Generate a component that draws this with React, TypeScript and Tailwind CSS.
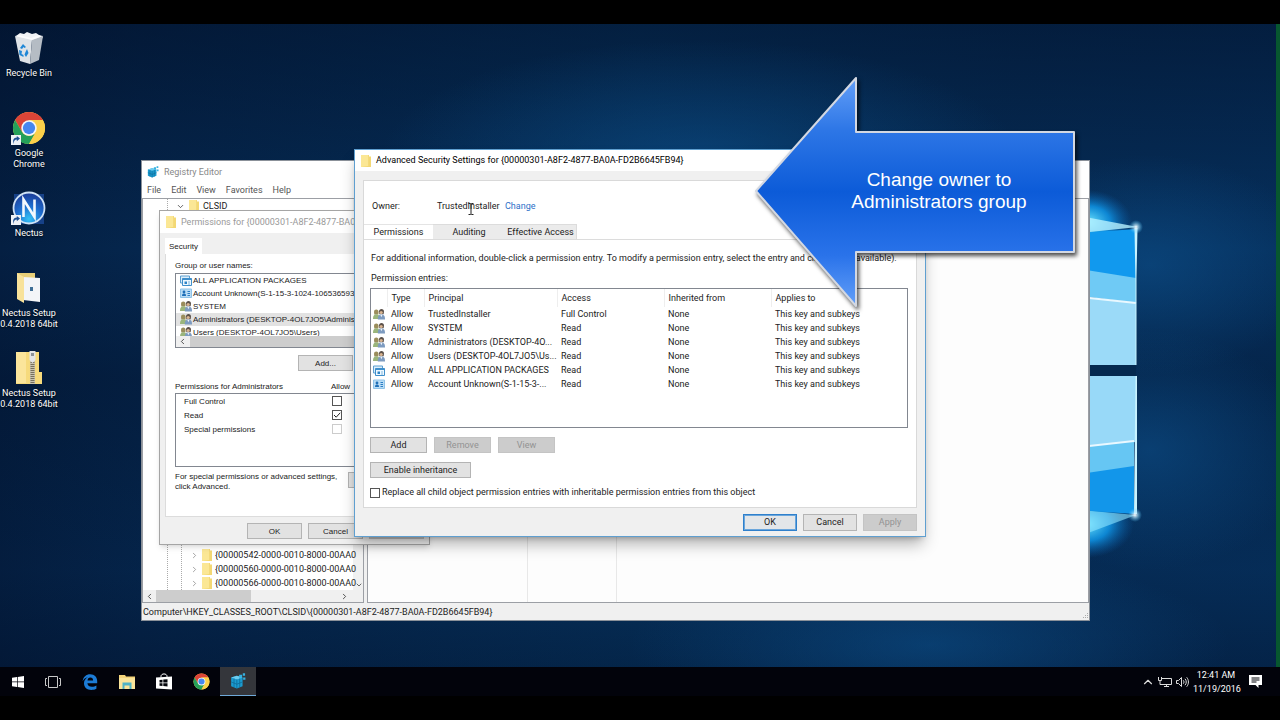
import type { ReactNode } from 'react';
import clsx from 'clsx';
import { ChevronDown, ChevronLeft, ChevronRight, ChevronUp } from 'lucide-react';

const KEY_ID = '{00000301-A8F2-4877-BA0A-FD2B6645FB94}';

const treeKeys = [
    '{00000542-0000-0010-8000-00AA0',
    '{00000560-0000-0010-8000-00AA0',
    '{00000566-0000-0010-8000-00AA0',
];

const groups = [
    { icon: 'package', name: 'ALL APPLICATION PACKAGES' },
    { icon: 'account', name: 'Account Unknown(S-1-15-3-1024-10653659300' },
    { icon: 'users', name: 'SYSTEM' },
    { icon: 'users', name: 'Administrators (DESKTOP-4OL7JO5\\Administrators)', selected: true },
    { icon: 'users', name: 'Users (DESKTOP-4OL7JO5\\Users)' },
];

const entries = [
    { icon: 'users', principal: 'TrustedInstaller', access: 'Full Control' },
    { icon: 'users', principal: 'SYSTEM', access: 'Read' },
    { icon: 'users', principal: 'Administrators (DESKTOP-4O...', access: 'Read' },
    { icon: 'users', principal: 'Users (DESKTOP-4OL7JO5\\Us...', access: 'Read' },
    { icon: 'package', principal: 'ALL APPLICATION PACKAGES', access: 'Read' },
    { icon: 'account', principal: 'Account Unknown(S-1-15-3-...', access: 'Read' },
];

/* ---------- icons ---------- */

function FolderIcon({ className = 'w-[10px] h-3' }: { className?: string }) {
    return (
        <svg viewBox="0 0 10 12" className={clsx('shrink-0', className)}>
            <path d="M0 0h8v1.5h2V12H0z" fill="#f3d874" />
            <path d="M0 0h7.2v11L0 12z" fill="#fbe795" />
        </svg>
    );
}

function PrincipalIcon({ kind }: { kind: string }) {
    if (kind === 'users') {
        return (
            <svg viewBox="0 0 12 11" className="w-3 h-[11px] shrink-0">
                <path d="M1 3c0-1.700.9-2.500 2.300-2.500S5.600 1.400 5.600 3L5.300 5.500h-4z" fill="#9a8d5c" />
                <path d="M0 10c0-3.200 1-4.700 3.400-4.700S6.800 6.800 6.800 10z" fill="#9ab57c" />
                <path d="M6 2.500C6 1 7 0 8.500 0S11 1 11 2.700l-.4 2.500H6.400z" fill="#5b5049" />
                <circle cx="8.200" cy="3.500" r="1.600" fill="#d9b592" />
                <path d="M4.800 10.500c0-3.600 1-5 3.600-5s3.600 1.400 3.600 5z" fill="#7d9bc0" />
                <path d="M7.300 5.700l1.100 2.600 1.100-2.600z" fill="#eef2f7" />
            </svg>
        );
    }
    if (kind === 'package') {
        return (
            <svg viewBox="0 0 12 11" className="w-3 h-[11px] shrink-0">
                <path d="M.5 1h9v7h-9z" fill="#dceefb" stroke="#5d9fd0" />
                <path d="M2.500 3.500h9v7h-9z" fill="#eef8ff" stroke="#3f8fcb" />
                <path d="M2.500 3.500h9v1.500h-9z" fill="#3f8fcb" />
                <path d="M4.500 6.500h2.500v2.500H4.500z" fill="#2f84c6" />
                <path d="M8 7h2M8 9h2" stroke="#7fb7de" />
            </svg>
        );
    }
    return (
        <svg viewBox="0 0 12 11" className="w-3 h-[11px] shrink-0">
            <path d="M.5 1h11v8.500H.5z" fill="#b9dcf5" stroke="#8fc3e8" />
            <circle cx="4" cy="4" r="1.400" fill="#1e6fb8" />
            <path d="M2 8c0-2 .8-2.600 2-2.600S6 6 6 8z" fill="#1e6fb8" />
            <path d="M7.500 3.500h2.500M7.500 5.500h2.500M7.500 7.500h2.500" stroke="#2b7dc4" />
        </svg>
    );
}

function RegistryIcon({ className }: { className: string }) {
    return (
        <svg viewBox="0 0 14 14" className={clsx('shrink-0', className)}>
            <path d="M1 4l5-1.500 5 1.500v7.500L6 13.500 1 11.500z" fill="#1b9bd0" />
            <path d="M1 4l5 1.600 5-1.600-5-1.500z" fill="#6ccdf0" />
            <path d="M6 5.600v7.900M1 7.800l5 2 5-2M3.500 4.800v7.700M8.500 4.800v7.700" stroke="#0d6590" strokeWidth=".6" fill="none" />
            <path d="M8 1.500h2.600v2.600H8zM11.200.3h2v2h-2zM11.500 4h2v2h-2z" fill="#35b1e0" />
        </svg>
    );
}

function ChromeIcon({ className }: { className: string }) {
    return (
        <svg viewBox="0 0 36 36" className={className}>
            <circle cx="18" cy="18" r="17" fill="#fbd04a" />
            <path d="M3.300 9.500A17 17 0 0 1 32.700 9.500H18L10.600 22.200z" fill="#db4437" />
            <path d="M3.300 9.500L10.600 22.200A8.500 8.500 0 0 0 18 26.500L15.500 34.800A17 17 0 0 1 3.300 9.500z" fill="#24a05a" />
            <path d="M10.600 22.200A8.500 8.500 0 0 0 25.300 22.200L18 35a17 17 0 0 1-4-.5z" fill="#24a05a" />
            <path d="M32.700 9.500H18a8.500 8.500 0 0 1 7.300 12.700L18 35A17 17 0 0 0 32.700 9.500z" fill="#fbd04a" />
            <circle cx="18" cy="18" r="8.200" fill="#f4f6f8" />
            <circle cx="18" cy="18" r="6.500" fill="#4687f0" />
        </svg>
    );
}

function ShortcutArrow() {
    return (
        <svg viewBox="0 0 10 10" className="absolute left-[-1px] bottom-0 w-[10px] h-[10px]">
            <path d="M0 0h10v10H0z" fill="#eef2f6" />
            <path d="M3 9c-.6-3 .6-4.600 2.800-4.600V6.200L9 3.400 5.800.9v1.700C2.500 2.700 1.200 5.500 3 9z" fill="#1d4f91" />
        </svg>
    );
}

function RecycleBinIcon() {
    return (
        <svg viewBox="0 0 30 34" className="w-[30px] h-[34px]">
            <path d="M2 5l4-3 4 1 3-2 5 2 4-1 3 2 4 2-2 3H4z" fill="#f1f3f5" />
            <path d="M1 5l17 4-2 24-10-3z" fill="#dfe3e7" />
            <path d="M29 5L18 9l-2 24 9-4z" fill="#b5bcc4" />
            <path d="M1 5l4-1 12 3 8-3 4 1-11 4z" fill="#ffffff" opacity=".7" />
            <path d="M6 17l3-4 3 3-1.500 1-1-1L8 18zM5 19l3 1-.5 3 2 1v2l-4-2zM13 18l1.500 4-2.500 4-1.500-2.500 1-2.500z" fill="#1f87d6" />
        </svg>
    );
}

function NectusIcon() {
    return (
        <svg viewBox="0 0 34 34" className="w-[34px] h-[34px]">
            <defs>
                <radialGradient id="nectus" cx=".5" cy=".85" r=".8">
                    <stop offset="0" stopColor="#35c2f5" />
                    <stop offset=".5" stopColor="#1e6fd0" />
                    <stop offset="1" stopColor="#1b3f9c" />
                </radialGradient>
            </defs>
            <path d="M2 3h30v30H2z" fill="#1c4a9a" opacity=".8" />
            <circle cx="17" cy="17" r="15.500" fill="url(#nectus)" stroke="#cfe2f5" strokeWidth="1.800" />
            <path d="M11.500 26V8.500L22.500 26V8.500" fill="none" stroke="#f3f8fd" strokeWidth="2.600" />
        </svg>
    );
}

function OpenFolderIcon() {
    return (
        <svg viewBox="0 0 24 32" className="w-6 h-8">
            <path d="M0 1h18v25H0z" fill="#e8cf78" />
            <path d="M6 5l17 1v24L6 28z" fill="#f3f5f8" />
            <path d="M0 1l7 4v26l-7-4z" fill="#f8e29a" />
            <path d="M13 15h3v4h-3z" fill="#3f6f96" />
        </svg>
    );
}

function ZipFolderIcon() {
    return (
        <svg viewBox="0 0 26 34" className="w-[26px] h-[34px]">
            <path d="M0 1h23v20h3v12H0z" fill="#f6da7c" />
            <path d="M0 1h10v31H0z" fill="#fbe59b" />
            <path d="M14 1h5v32h-5z" fill="#c9c3b0" />
            <path d="M16.500 11v22" stroke="#77705c" strokeWidth="4" strokeDasharray="1 1" />
            <path d="M13.500 0h6v9l-3 3-3-3z" fill="#e3e5e7" />
            <path d="M15 2h3v3h-3z" fill="#8b9196" />
        </svg>
    );
}

const desktopItems: { label: string; icon: ReactNode; shortcut?: boolean }[] = [
    { label: 'Recycle Bin', icon: <RecycleBinIcon /> },
    { label: 'Google Chrome', icon: <ChromeIcon className="w-[34px] h-[34px]" />, shortcut: true },
    { label: 'Nectus', icon: <NectusIcon />, shortcut: true },
    { label: 'Nectus Setup 0.4.2018 64bit', icon: <OpenFolderIcon /> },
    { label: 'Nectus Setup 0.4.2018 64bit', icon: <ZipFolderIcon /> },
];

/* ---------- shared controls ---------- */

interface WinButtonProps {
    children: ReactNode;
    className?: string;
    disabled?: boolean;
    primary?: boolean;
}

function WinButton({ children, className, disabled, primary }: WinButtonProps) {
    return (
        <button
            disabled={disabled}
            className={clsx(
                'shrink-0 border text-center',
                disabled && 'bg-[#cccccc] border-[#c4c4c4] text-[#939393]',
                primary && 'bg-[#e3e6e9] border-[#2f80cc] ring-1 ring-inset ring-[#6aa6dc]',
                !disabled && !primary && 'bg-[#e2e2e2] border-[#b4b4b4]',
                className,
            )}
        >
            {children}
        </button>
    );
}

function TickBox({ id, checked, disabled }: { id: string; checked?: boolean; disabled?: boolean }) {
    return (
        <span className="relative shrink-0 w-[10px] h-[10px]">
            <input
                id={id}
                type="checkbox"
                defaultChecked={checked}
                disabled={disabled}
                className="peer block appearance-none w-[10px] h-[10px] bg-white border border-[#555] disabled:border-[#ccc]"
            />
            <svg viewBox="0 0 10 10" className="absolute inset-0 hidden peer-checked:block pointer-events-none">
                <path d="M2 5l2.200 2.200L8.200 2.800" fill="none" stroke="#222" />
            </svg>
        </span>
    );
}

/* ---------- wallpaper ---------- */

function Wallpaper() {
    return (
        <svg viewBox="0 24 1280 643" preserveAspectRatio="none" className="absolute inset-0 w-full h-full">
            <defs>
                <linearGradient id="base" x1="0" x2="1" y1="0" y2="0">
                    <stop offset="0" stopColor="#041f42" />
                    <stop offset=".11" stopColor="#05264d" />
                    <stop offset=".5" stopColor="#06335f" />
                    <stop offset=".8" stopColor="#062e59" />
                    <stop offset="1" stopColor="#06305d" />
                </linearGradient>
                <linearGradient id="shade" x1="0" x2="0" y1="0" y2="1">
                    <stop offset="0" stopColor="#010c22" stopOpacity=".5" />
                    <stop offset=".35" stopColor="#010c22" stopOpacity="0" />
                    <stop offset=".55" stopColor="#010c22" stopOpacity=".3" />
                    <stop offset=".85" stopColor="#010c22" stopOpacity=".1" />
                    <stop offset="1" stopColor="#010c22" stopOpacity=".35" />
                </linearGradient>
                <radialGradient id="haze">
                    <stop offset="0" stopColor="#0d5390" stopOpacity=".9" />
                    <stop offset="1" stopColor="#0d5390" stopOpacity="0" />
                </radialGradient>
                <radialGradient id="flare">
                    <stop offset="0" stopColor="#6fe6ff" />
                    <stop offset=".5" stopColor="#0f9cf0" stopOpacity=".8" />
                    <stop offset="1" stopColor="#0a5fae" stopOpacity="0" />
                </radialGradient>
                <radialGradient id="spark">
                    <stop offset="0" stopColor="#ffffff" />
                    <stop offset="1" stopColor="#49c8ff" stopOpacity="0" />
                </radialGradient>
            </defs>
            <path d="M0 24h1280v643H0z" fill="url(#base)" />
            <path d="M0 24h1280v643H0z" fill="url(#shade)" />
            <ellipse cx="700" cy="160" rx="320" ry="120" fill="url(#haze)" opacity=".6" />
            <ellipse cx="930" cy="645" rx="300" ry="90" fill="url(#haze)" opacity=".6" />
            <ellipse cx="1150" cy="265" rx="170" ry="110" fill="url(#haze)" opacity=".6" />
            <ellipse cx="1150" cy="450" rx="160" ry="120" fill="url(#haze)" opacity=".6" />
            <ellipse cx="1088" cy="222" rx="44" ry="32" fill="url(#flare)" />
            <ellipse cx="1086" cy="524" rx="48" ry="34" fill="url(#flare)" />
            <path d="M1080 216l58 11-58 6z" fill="#b8f1ff" opacity=".8" />
            <path d="M1080 536l56-21-56-5z" fill="#8fe6ff" opacity=".6" />
            <path d="M1080 233l56-4v50l-56-9z" fill="#1199ee" />
            <path d="M1080 269l56 9v25l-56-7z" fill="#6fcaf5" />
            <path d="M1080 296l56 7v62h-56z" fill="#9bdaf8" />
            <path d="M1080 297l56 6" stroke="#e9f8ff" strokeWidth="2" />
            <path d="M1080 365h56v11h-56z" fill="#04294f" />
            <path d="M1080 376h56v66l-56 5z" fill="#98d9f8" />
            <path d="M1080 447l54-6v26l-54 8z" fill="#66c6f3" />
            <path d="M1080 447l54-6" stroke="#e9f8ff" strokeWidth="2" />
            <path d="M1080 474l54-8v48l-54-4z" fill="#1296ea" />
            <path d="M1134.500 228h3l-1 50v87h-1v-80zM1135.500 376h1.500v138h-3z" fill="#c9f3ff" />
            <circle cx="1136" cy="227" r="7" fill="url(#spark)" />
            <circle cx="1135" cy="515" r="7" fill="url(#spark)" />
            <path d="M1276 24h4v643h-4z" fill="#07572f" />
        </svg>
    );
}

/* ---------- windows ---------- */

function RegistryEditor() {
    return (
        <section className="absolute left-[141px] top-[136px] w-[949px] flex flex-col bg-white border border-[#8b9199]">
            <header className="h-[21px] pt-px px-[5px] flex items-center gap-[5px] text-[#888]">
                <RegistryIcon className="w-3 h-3" />
                <h2>Registry Editor</h2>
            </header>
            <nav className="h-4 px-[5px] flex items-center gap-[10px] text-[#555]">
                {['File', 'Edit', 'View', 'Favorites', 'Help'].map((item) => (
                    <button key={item}>{item}</button>
                ))}
            </nav>

            <div className="h-[405px] flex gap-[3px] bg-[#f0f0f0]">
                <div className="w-[222px] flex flex-col border border-[#9c9fa5] bg-white">
                    <div className="flex-1 flex min-h-0">
                        <div className="relative z-10 flex-1 min-w-0 pl-6 flex">
                            <div className="flex-1 min-w-0 flex flex-col border-l border-dotted border-[#aaa] pl-2">
                                <div className="h-[14px] flex items-center gap-1">
                                    <ChevronDown size={9} color="#333" />
                                    <FolderIcon />
                                    <span className="text-[#222]">CLSID</span>
                                </div>
                                <ul className="flex-1 ml-[5px] pl-2 flex flex-col justify-end border-l border-dotted border-[#aaa]">
                                    {treeKeys.map((key) => (
                                        <li key={key} className="h-[14px] flex items-center gap-[3px] whitespace-nowrap">
                                            <ChevronRight size={9} color="#888" className="shrink-0" />
                                            <FolderIcon />
                                            <span>{key}</span>
                                        </li>
                                    ))}
                                </ul>
                            </div>
                        </div>
                        <div className="w-[10px] bg-[#f0f0f0] flex flex-col justify-between items-end py-px">
                            <ChevronUp size={8} />
                            <ChevronDown size={8} />
                        </div>
                    </div>
                    <div className="h-3 pl-[2px] pr-[14px] bg-[#f0f0f0] flex items-center gap-[2px]">
                        <ChevronLeft size={9} />
                        <div className="w-[95px] h-full bg-[#cdcdcd]" />
                        <ChevronRight size={9} className="ml-auto" />
                    </div>
                </div>
                <div className="flex-1 flex border border-[#9c9fa5] bg-[#fdfdfd]">
                    <div className="w-[160px] border-r border-[#e8e8e8]" />
                    <div className="w-[89px] border-r border-[#e8e8e8]" />
                </div>
            </div>
            <footer className="h-[17px] pt-[2px] flex items-center justify-between bg-[#f0f0f0] pl-px text-[#222]">
                <span>Computer\HKEY_CLASSES_ROOT\CLSID\{KEY_ID}</span>
                <svg viewBox="0 0 8 8" className="w-2 h-2 self-end">
                    <path d="M6 1h1v1H6zM4 3h1v1H4zM6 3h1v1H6zM2 5h1v1H2zM4 5h1v1H4zM6 5h1v1H6z" fill="#aaa" />
                </svg>
            </footer>
        </section>
    );
}

function PermissionsDialog() {
    return (
        <section className="absolute z-10 left-[159px] top-[186px] w-[271px] bg-[#f0f0f0] border border-[#a5a5a5] shadow-md text-[8px] font-['Liberation_Sans',sans-serif]">
            <header className="h-[22px] px-[6px] flex items-center gap-[5px] bg-white text-[#999] overflow-hidden whitespace-nowrap text-[9px] font-[Roboto,sans-serif]">
                <FolderIcon />
                <h2>Permissions for {KEY_ID}</h2>
            </header>
            <div className="px-[5px] pt-[5px] pb-[5px]">
                <button role="tab" aria-selected="true" className="block h-4 px-1 bg-white">Security</button>
                <div className="bg-white border border-t-0 border-[#dcdcdc] px-[9px] pt-[6px] pb-6">
                    <p>Group or user names:</p>
                    <div className="mt-[2px] h-[75px] flex flex-col border border-[#828790]">
                        <ul className="flex-1 min-h-0 overflow-hidden whitespace-nowrap">
                            {groups.map((g) => (
                                <li key={g.name} className={clsx('h-[13px] flex items-center gap-px pl-1', g.selected && 'bg-[#e2e2e2]')}>
                                    <PrincipalIcon kind={g.icon} />
                                    {g.name}
                                </li>
                            ))}
                        </ul>
                        <div className="h-[11px] flex items-center gap-[3px] px-[2px] bg-[#f0f0f0]">
                            <ChevronLeft size={9} />
                            <div className="flex-1 mr-3 h-full bg-[#cdcdcd]" />
                        </div>
                    </div>
                    <div className="mt-[7px] flex justify-end gap-[6px]">
                        <WinButton className="w-[55px] h-4">Add...</WinButton>
                        <WinButton className="w-[55px] h-4">Remove</WinButton>
                    </div>
                    <div className="mt-[10px] flex">
                        <p className="flex-1">Permissions for Administrators</p>
                        <span className="w-[83px]">Allow</span>
                    </div>
                    <ul className="mt-px h-[74px] pl-2 border border-[#828790]">
                        {['Full Control', 'Read', 'Special permissions'].map((name, i) => (
                            <li key={name} className="h-[14px] flex items-center pr-[71px]">
                                <label htmlFor={`perm-${i}`} className="flex-1">{name}</label>
                                <TickBox id={`perm-${i}`} checked={i === 1} disabled={i === 2} />
                            </li>
                        ))}
                    </ul>
                    <div className="mt-[5px] flex justify-between leading-[10px]">
                        <p className="w-[166px]">
                            For special permissions or advanced settings,
                            <br />
                            click Advanced.
                        </p>
                        <WinButton className="w-[66px] h-4">Advanced</WinButton>
                    </div>
                </div>
                <div className="mt-[6px] flex justify-end gap-[6px]">
                    <WinButton className="w-[55px] h-4">OK</WinButton>
                    <WinButton className="w-[55px] h-4">Cancel</WinButton>
                    <WinButton className="w-[55px] h-4" disabled>Apply</WinButton>
                </div>
            </div>
        </section>
    );
}

function AdvancedSecurityDialog() {
    return (
        <section className="absolute z-20 left-[354px] top-[125px] w-[572px] bg-[#f0f0f0] border border-[#5f9fd0] shadow-lg shadow-black/30">
            <header className="h-[21px] px-[6px] flex items-center gap-[5px] bg-white text-black">
                <FolderIcon />
                <h2>Advanced Security Settings for {KEY_ID}</h2>
            </header>
            <div className="px-2 pt-[9px] pb-[5px]">
                <div className="bg-white border border-[#d9d9d9]">
                    <div className="pt-5 pb-3 pl-2 flex">
                        <span className="w-[65px]">Owner:</span>
                        <span className="w-[68px] whitespace-nowrap">TrustedInstaller</span>
                        <a href="#change" className="text-[#2c6fc8]">Change</a>
                    </div>
                    <div role="tablist" className="h-4 flex border-b border-[#dcdcdc]">
                        <button role="tab" aria-selected="true" className="w-[69px] border-t border-[#e4e4e4]">Permissions</button>
                        <button role="tab" className="w-[72px] bg-[#ebebeb] border-t border-[#dcdcdc]">Auditing</button>
                        <button role="tab" className="w-[72px] bg-[#ebebeb] border-t border-r border-[#dcdcdc]">Effective Access</button>
                    </div>

                    <div className="px-[6px] pt-[13px] pb-[9px]">
                        <p className="pl-px whitespace-nowrap">
                            For additional information, double-click a permission entry. To modify a permission entry, select the entry and click Edit (if available).
                        </p>
                        <p className="pl-px mt-[9px]">Permission entries:</p>
                        <div className="mt-1 h-[140px] mr-[2px] border border-[#828790]">
                            <table className="w-full table-fixed text-left leading-[14px]">
                                <colgroup>
                                    <col className="w-4" />
                                    <col className="w-[37px]" />
                                    <col className="w-[133px]" />
                                    <col className="w-[107px]" />
                                    <col className="w-[107px]" />
                                    <col />
                                </colgroup>
                                <thead>
                                    <tr className="h-[18px]">
                                        <th />
                                        {['Type', 'Principal', 'Access', 'Inherited from', 'Applies to'].map((name) => (
                                            <th key={name} className="p-0 pl-1 font-normal border-l border-[#eee]">{name}</th>
                                        ))}
                                    </tr>
                                </thead>
                                <tbody>
                                    {entries.map((e) => (
                                        <tr key={e.principal} className="h-[14px] whitespace-nowrap">
                                            <td className="p-0 pl-[2px]"><PrincipalIcon kind={e.icon} /></td>
                                            <td className="p-0 pl-1">Allow</td>
                                            <td className="p-0 pl-1">{e.principal}</td>
                                            <td className="p-0 pl-1">{e.access}</td>
                                            <td className="p-0 pl-1">None</td>
                                            <td className="p-0 pl-1">This key and subkeys</td>
                                        </tr>
                                    ))}
                                </tbody>
                            </table>
                        </div>
                        <div className="mt-[9px] flex gap-[7px]">
                            <WinButton className="w-[57px] h-4">Add</WinButton>
                            <WinButton className="w-[57px] h-4" disabled>Remove</WinButton>
                            <WinButton className="w-[57px] h-4" disabled>View</WinButton>
                        </div>
                        <WinButton className="mt-[9px] w-[101px] h-4 block">Enable inheritance</WinButton>
                        <div className="mt-[9px] flex items-center gap-[2px]">
                            <TickBox id="replace-child" />
                            <label htmlFor="replace-child">
                                Replace all child object permission entries with inheritable permission entries from this object
                            </label>
                        </div>
                    </div>
                </div>
                <div className="mt-[6px] flex justify-end gap-[6px]">
                    <WinButton className="w-[54px] h-[17px]" primary>OK</WinButton>
                    <WinButton className="w-[54px] h-[17px]">Cancel</WinButton>
                    <WinButton className="w-[54px] h-[17px]" disabled>Apply</WinButton>
                </div>
            </div>
        </section>
    );
}

function Callout() {
    return (
        <aside className="absolute z-30 left-[753px] top-[50px] w-[326px] h-[240px] flex items-center justify-center pl-[46px] pb-[6px]">
            <svg viewBox="754 74 326 240" className="absolute inset-0 w-full h-full drop-shadow-[2px_3px_2px_rgba(0,0,0,0.7)]">
                <defs>
                    <linearGradient id="arrow" gradientUnits="userSpaceOnUse" x1="0" x2="0" y1="78" y2="306">
                        <stop offset="0" stopColor="#639ff8" />
                        <stop offset=".23" stopColor="#2d76e6" />
                        <stop offset=".5" stopColor="#0c5bd8" />
                        <stop offset=".78" stopColor="#2a73ea" />
                        <stop offset="1" stopColor="#639ff8" />
                    </linearGradient>
                </defs>
                <path
                    d="M757 191L857 78v54h218v120H857v54z"
                    fill="url(#arrow)"
                    stroke="#d3d8e2"
                    strokeWidth="2"
                    strokeLinejoin="round"
                />
            </svg>
            <p className="relative text-center text-white text-[19px] leading-[22px] font-['Liberation_Sans',sans-serif]">
                Change owner to
                <br />
                Administrators group
            </p>
        </aside>
    );
}

/* ---------- taskbar ---------- */

function Taskbar() {
    return (
        <footer className="h-[29px] flex items-center justify-between bg-[#02030b]">
            <div className="h-full flex gap-px">
                <button aria-label="Start" className="w-[34px] grid place-items-center">
                    <svg viewBox="0 0 12 12" className="w-3 h-3 ml-[2px]">
                        <path d="M0 1.700L5 1v4.600H0zM5.700.9L12 0v5.600H5.700zM0 6.300h5V11l-5-.7zM5.700 6.300H12V12l-6.300-.9z" fill="#fff" />
                    </svg>
                </button>
                <button aria-label="Task View" className="w-9 grid place-items-center">
                    <svg viewBox="0 0 16 12" className="w-4 h-3" fill="none" stroke="#c8c8c8">
                        <path d="M3.500.5h9v11h-9zM2 2.500H.5v7H2M14 2.500h1.500v7H14" />
                    </svg>
                </button>
                <button aria-label="Edge" className="w-9 grid place-items-center">
                    <svg viewBox="0 0 16 16" className="w-4 h-4">
                        <path
                            d="M.6 7.200C1.200 3 4.200.3 8.200.3c4.500 0 7 3.200 7 7v1.900H5.400c.2 2.400 2.100 3.500 4.500 3.500 1.700 0 3.200-.5 4.500-1.300v3.300c-1.400.8-3 1.200-5 1.200-4.400 0-7.400-2.500-7.400-6.700 0-2.600 1.500-4.800 3.900-5.900C3.600 3.700 1.700 5 .6 7.200zM5.500 6.500h5.600c0-1.900-.9-3-2.700-3S5.700 4.600 5.500 6.500z"
                            fill="#1c7cd6"
                        />
                    </svg>
                </button>
                <button aria-label="File Explorer" className="w-9 grid place-items-center">
                    <svg viewBox="0 0 16 14" className="w-4 h-[14px]">
                        <path d="M0 0h6l1 1.500h9V14H0z" fill="#f4d47a" />
                        <path d="M0 3h16v11H0z" fill="#fae49a" />
                        <path d="M3.500 7.500h9V14h-2v-3.500h-5V14h-2z" fill="#4fb3c6" />
                    </svg>
                </button>
                <button aria-label="Store" className="w-9 grid place-items-center">
                    <svg viewBox="0 0 16 17" className="w-4 h-[17px]">
                        <path d="M5 4.500V3.200C5 .2 11 .2 11 3.200v1.300" fill="none" stroke="#fff" />
                        <path d="M0 4.500l16-1v13L0 15.500z" fill="#fff" />
                        <path d="M3.500 7l3-.3v2.800h-3zM7.300 6.600l4.200-.4v3.300H7.300zM3.500 10.200h3V13l-3-.3zM7.300 10.200h4.200v3.300l-4.200-.4z" fill="#05060c" />
                    </svg>
                </button>
                <button aria-label="Chrome" className="w-9 grid place-items-center">
                    <ChromeIcon className="w-[17px] h-[17px]" />
                </button>
                <button aria-label="Registry Editor" className="w-9 grid place-items-center bg-[#34363b] border-b border-[#6fa9d8]">
                    <RegistryIcon className="w-4 h-4" />
                </button>
            </div>
            <div className="flex items-center pr-[18px] text-white">
                <ChevronUp size={14} color="#ddd" />
                <svg viewBox="0 0 14 12" className="ml-[3px] w-[14px] h-3" fill="none" stroke="#ddd">
                    <path d="M4 2.500h9.500v6H4M.5 1v3.500h3V1M2 4.500v4h2M8.500 8.500v2M6 10.500h5" />
                </svg>
                <svg viewBox="0 0 13 12" className="ml-1 w-[13px] h-3" fill="none" stroke="#ddd">
                    <path d="M.5 4.500h2l3-3v9l-3-3h-2zM7.300 4.300c.9 1 .9 2.400 0 3.400M9 2.800c1.700 1.900 1.700 4.500 0 6.400M10.700 1.300c2.300 2.700 2.300 6.700 0 9.400" />
                </svg>
                <time className="ml-1 w-[46px] text-center leading-[14px] whitespace-nowrap">
                    12:41 AM
                    <br />
                    11/19/2016
                </time>
                <svg viewBox="0 0 13 13" className="ml-[10px] w-[13px] h-[13px]">
                    <path d="M0 0h13v10H9.500v3L6.500 10H0z" fill="#fff" />
                    <path d="M2.500 3h8M2.500 5h8M2.500 7h5" stroke="#05060c" />
                </svg>
            </div>
        </footer>
    );
}

export default function App() {
    return (
        <div className="min-h-screen flex flex-col bg-black py-6 select-none overflow-hidden text-[9px] leading-[11px] text-[#222] font-[Roboto,'Open_Sans',sans-serif]">
            <main className="flex-1 relative min-h-[643px] overflow-hidden">
                <Wallpaper />
                <ul className="relative w-[58px] pt-1 text-center text-white">
                    {desktopItems.map((item, i) => (
                        <li key={i} className="h-20">
                            <div className="h-10 flex items-center justify-center">
                                <span className="relative">
                                    {item.icon}
                                    {item.shortcut && <ShortcutArrow />}
                                </span>
                            </div>
                            <p className="[text-shadow:0_1px_2px_#000]">{item.label}</p>
                        </li>
                    ))}
                </ul>

                <RegistryEditor />
                <PermissionsDialog />
                <AdvancedSecurityDialog />
                <Callout />

                {/* text cursor */}
                <svg viewBox="0 0 6 12" className="absolute z-30 left-[468px] top-[179px] w-[6px] h-3" fill="none" stroke="#222">
                    <path d="M.5.5h2l.5.5.5-.5h2M3 1v10M.5 11.500h2l.5-.5.5.5h2" />
                </svg>
            </main>
            <Taskbar />
        </div>
    );
}
